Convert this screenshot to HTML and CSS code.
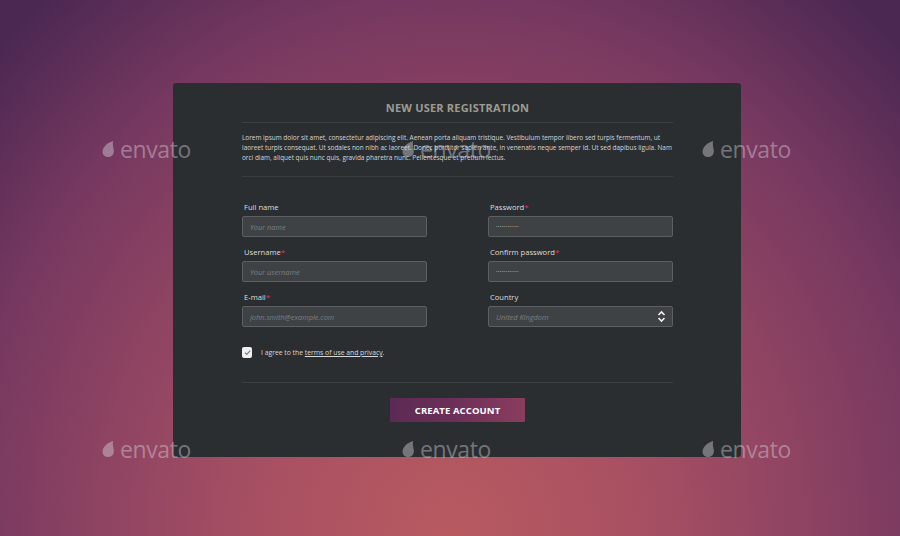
FILE: index.html
```html
<!DOCTYPE html>
<html>
<head>
<meta charset="utf-8">
<link rel="stylesheet" href="styles.css">
</head>
<body>
<div class="stage">
  <div class="card">
    <h1 class="title">NEW USER REGISTRATION</h1>
    <p class="intro">Lorem ipsum dolor sit amet, consectetur adipiscing elit. Aenean porta aliquam tristique. Vestibulum tempor libero sed turpis fermentum, ut laoreet turpis consequat. Ut sodales non nibh ac laoreet. Donec porttitor sapien ante, in venenatis neque semper id. Ut sed dapibus ligula. Nam orci diam, aliquet quis nunc quis, gravida pharetra nunc. Pellentesque et pretium lectus.</p>
    <form class="form">
      <div class="grid">
        <label class="field"><span class="lbl">Full name</span><input class="inp" type="text" placeholder="Your name"></label>
        <label class="field"><span class="lbl">Password<b class="req">*</b></span><input class="inp pw" type="password" value="aaaaaaaaaaaa"></label>
        <label class="field"><span class="lbl">Username<b class="req">*</b></span><input class="inp" type="text" placeholder="Your username"></label>
        <label class="field"><span class="lbl">Confirm password<b class="req">*</b></span><input class="inp pw" type="password" value="aaaaaaaaaaaa"></label>
        <label class="field"><span class="lbl">E-mail<b class="req">*</b></span><input class="inp" type="text" placeholder="john.smith@example.com"></label>
        <label class="field"><span class="lbl">Country</span>
          <span class="select"><span class="sel-text">United Kingdom</span>
            <svg class="arrows" width="9" height="13" viewBox="0 0 9 13"><path d="M1.5 5 L4.5 2 L7.5 5 M1.5 8 L4.5 11 L7.5 8" fill="none" stroke="#f2f2f2" stroke-width="1.6"/></svg>
          </span>
        </label>
      </div>
      <div class="agree">
        <span class="check"><svg width="9" height="9" viewBox="0 0 9 9"><path d="M2 4.6 L3.8 6.4 L7.2 2.6" fill="none" stroke="#7a7d80" stroke-width="1.2"/></svg></span>
        <span class="agree-text">I agree to the <u>terms of use and privacy</u>.</span>
      </div>
      <div class="actions">
        <button type="button" class="btn">CREATE ACCOUNT</button>
      </div>
    </form>
  </div>

  <div class="wm wm1"><svg width="15" height="18" viewBox="0 0 14 16"><path d="M10.5 0.5 C5 2 0.5 6 0.5 10.5 C0.5 13.5 3 15.5 6 15.5 C9.5 15.5 11.5 12.5 11 9 C10.6 6 9.5 3.5 10.5 0.5 Z" fill="currentColor"/></svg><span>envato</span></div>
  <div class="wm wm2"><svg width="15" height="18" viewBox="0 0 14 16"><path d="M10.5 0.5 C5 2 0.5 6 0.5 10.5 C0.5 13.5 3 15.5 6 15.5 C9.5 15.5 11.5 12.5 11 9 C10.6 6 9.5 3.5 10.5 0.5 Z" fill="currentColor"/></svg><span>envato</span></div>
  <div class="wm wm3"><svg width="15" height="18" viewBox="0 0 14 16"><path d="M10.5 0.5 C5 2 0.5 6 0.5 10.5 C0.5 13.5 3 15.5 6 15.5 C9.5 15.5 11.5 12.5 11 9 C10.6 6 9.5 3.5 10.5 0.5 Z" fill="currentColor"/></svg><span>envato</span></div>
  <div class="wm wm4"><svg width="15" height="18" viewBox="0 0 14 16"><path d="M10.5 0.5 C5 2 0.5 6 0.5 10.5 C0.5 13.5 3 15.5 6 15.5 C9.5 15.5 11.5 12.5 11 9 C10.6 6 9.5 3.5 10.5 0.5 Z" fill="currentColor"/></svg><span>envato</span></div>
  <div class="wm wm5"><svg width="15" height="18" viewBox="0 0 14 16"><path d="M10.5 0.5 C5 2 0.5 6 0.5 10.5 C0.5 13.5 3 15.5 6 15.5 C9.5 15.5 11.5 12.5 11 9 C10.6 6 9.5 3.5 10.5 0.5 Z" fill="currentColor"/></svg><span>envato</span></div>
  <div class="wm wm6"><svg width="15" height="18" viewBox="0 0 14 16"><path d="M10.5 0.5 C5 2 0.5 6 0.5 10.5 C0.5 13.5 3 15.5 6 15.5 C9.5 15.5 11.5 12.5 11 9 C10.6 6 9.5 3.5 10.5 0.5 Z" fill="currentColor"/></svg><span>envato</span></div>
</div>
</body>
</html>
```
FILE: styles.css
```css
* { box-sizing: border-box; }
html, body { margin: 0; padding: 0; }
body {
  width: 900px;
  height: 536px;
  overflow: hidden;
  font-family: "Open Sans", "Noto Sans", sans-serif;
}
.stage {
  position: relative;
  width: 900px;
  height: 536px;
  padding-top: 83px;
  background: radial-gradient(ellipse 70% 130% at 50% 100%, #b85a60 0%, #a85062 30%, #8f4462 55%, #763860 77%, #4b2852 100%);
}
.card {
  margin-left: 173px;
  width: 568px;
  height: 374px;
  background: #2b2e31;
  border-radius: 3px;
  padding: 0 68px 0 69px;
}
.title {
  margin: 0;
  padding: 19px 0 8px;
  line-height: 12px;
  font-size: 11px;
  font-weight: 700;
  letter-spacing: 0.2px;
  color: #9c9c91;
  text-align: center;
  border-bottom: 1px solid #3d4043;
}
.intro {
  margin: 0;
  padding: 10px 0 13px;
  font-size: 6.45px;
  line-height: 10px;
  color: #d6d6d6;
  border-bottom: 1px solid #3a3d40;
}
.form { padding-top: 25px; }
.grid {
  display: grid;
  grid-template-columns: 185px 185px;
  column-gap: 61px;
  row-gap: 10px;
}
.field { display: flex; flex-direction: column; }
.lbl {
  display: block;
  padding-left: 2px;
  font-size: 7.6px;
  line-height: 10px;
  height: 10px;
  color: #dedede;
  margin-bottom: 4px;
}
.req { color: #e8286a; font-weight: 400; font-size: 8px; }
.inp {
  width: 185px;
  height: 21px;
  margin: 0;
  padding: 0 0 0 7px;
  background: #3f4245;
  border: 1px solid #5d6063;
  border-radius: 2px;
  font-family: "Open Sans", sans-serif;
  font-size: 7.4px;
  font-style: italic;
  color: #cfcfcf;
  outline: none;
}
.inp::placeholder { color: #7c7f82; }
.pw {
  font-style: normal;
  font-size: 4px;
  letter-spacing: 0.4px;
  color: #a9a9a9;
}
.select {
  display: flex;
  align-items: center;
  justify-content: space-between;
  width: 185px;
  height: 21px;
  padding: 0 6px 0 7px;
  background: #3f4245;
  border: 1px solid #5d6063;
  border-radius: 2px;
}
.sel-text { font-size: 7.4px; font-style: italic; color: #7c7f82; }
.arrows { display: block; }
.agree {
  display: flex;
  align-items: center;
  margin-top: 20px;
  height: 11px;
}
.check {
  width: 10px;
  height: 11px;
  background: #f0f0f0;
  border-radius: 2px;
  display: flex;
  align-items: center;
  justify-content: center;
  margin-right: 9px;
}
.agree-text { font-size: 6.8px; color: #d8d8d8; }
.agree-text u { text-decoration-thickness: 0.5px; }
.actions {
  margin-top: 24px;
  border-top: 1px solid #3d4043;
  padding-top: 15px;
  display: flex;
  justify-content: center;
}
.btn {
  width: 135px;
  height: 24px;
  border: 0;
  border-radius: 1px;
  background: linear-gradient(90deg, #5b2a54 0%, #6d3058 50%, #8a3d5e 100%);
  color: #ffffff;
  font-family: "Open Sans", sans-serif;
  font-size: 9.5px;
  font-weight: 700;
  letter-spacing: 0.1px;
  padding: 0;
}
.wm {
  position: absolute;
  display: flex;
  align-items: center;
  gap: 3px;
  color: rgba(220, 220, 225, 0.42);
  font-family: "Open Sans", sans-serif;
  font-size: 23px;
  letter-spacing: -0.4px;
  line-height: 20px;
}
.wm svg { display: block; }
.wm1 { left: 102px; top: 139px; }
.wm2 { left: 402px; top: 139px; }
.wm3 { left: 702px; top: 139px; }
.wm4 { left: 102px; top: 439px; }
.wm5 { left: 402px; top: 439px; }
.wm6 { left: 702px; top: 439px; }
```
